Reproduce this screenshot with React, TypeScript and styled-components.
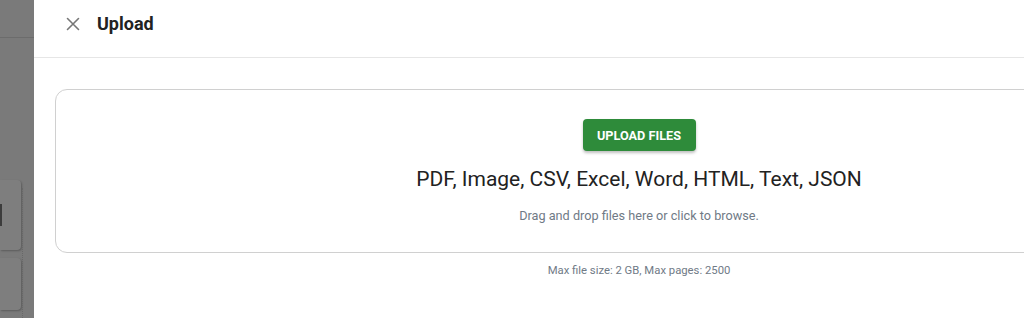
import { FC } from 'react';
import styled, { createGlobalStyle } from 'styled-components';

const GlobalStyle = createGlobalStyle`
  html, body {
    margin: 0;
    padding: 0;
    height: 318px;
    overflow: hidden;
    background: #777;
  }
  body {
    font-family: Roboto, "Liberation Sans", Arial, sans-serif;
  }
`;

const App: FC = () => (
  <>
    <GlobalStyle />
    <Screen>
      <Backdrop>
        <BgTopBar />
        <BgCard $height={ 80 }>
          <BgMark />
        </BgCard>
        <BgCard $height={ 60 } />
        <BgScroll />
      </Backdrop>
      <Drawer>
        <Header>
          <CloseButton aria-label='close'>
            <svg width='14' height='14' viewBox='0 0 14 14'>
              <path d='M1.5 1.5 L12.5 12.5 M12.5 1.5 L1.5 12.5' stroke='#777' strokeWidth='1.6' strokeLinecap='round' />
            </svg>
          </CloseButton>
          <Title>Upload</Title>
        </Header>
        <Body>
          <DropZone>
            <UploadButton>Upload files</UploadButton>
            <Formats>PDF, Image, CSV, Excel, Word, HTML, Text, JSON</Formats>
            <Hint>Drag and drop files here or click to browse.</Hint>
          </DropZone>
          <Limits>Max file size: 2 GB, Max pages: 2500</Limits>
        </Body>
      </Drawer>
    </Screen>
  </>
);

const Screen = styled.div`
  display: flex;
  width: 1024px;
  height: 318px;
  overflow: hidden;
`;

const Backdrop = styled.div`
  position: relative;
  flex: 0 0 34px;
  display: flex;
  flex-direction: column;
  background: #7a7a7a;
`;

const BgTopBar = styled.div`
  height: 42px;
  border-bottom: 1px solid #6c6c6c;
  margin-bottom: 142px;
`;

interface BgCardProps {
  $height: number;
}

const BgCard = styled.div<BgCardProps>`
  height: ${ props => props.$height }px;
  width: 21px;
  margin-bottom: 8px;
  background: #7e7e7e;
  border-radius: 0 4px 4px 0;
  box-shadow: 1px 1px 2px rgba(0, 0, 0, 0.25);
  display: flex;
  align-items: center;
`;

const BgMark = styled.div`
  width: 2px;
  height: 22px;
  background: #3c3c3c;
`;

const BgScroll = styled.div`
  position: absolute;
  left: 22px;
  top: 188px;
  bottom: 0;
  border-left: 1px dotted #686868;
`;

const Drawer = styled.div`
  flex: 0 0 1210px;
  background: #fff;
  box-shadow: -2px 0 4px rgba(0, 0, 0, 0.15);
  display: flex;
  flex-direction: column;
`;

const Header = styled.div`
  height: 58px;
  display: flex;
  align-items: flex-start;
  gap: 16px;
  padding: 13px 0 0 31px;
  box-sizing: border-box;
  border-bottom: 1px solid #e6e6e6;
`;

const CloseButton = styled.div`
  width: 16px;
  height: 22px;
  display: flex;
  align-items: center;
  justify-content: center;
`;

const Title = styled.h1`
  margin: 0;
  font-size: 18px;
  line-height: 22px;
  font-weight: 700;
  color: #222;
`;

const Body = styled.div`
  padding: 31px 21px 0 21px;
  display: flex;
  flex-direction: column;
  align-items: center;
`;

const DropZone = styled.div`
  width: 100%;
  box-sizing: border-box;
  height: 164px;
  border: 1px solid #d0d0d0;
  border-radius: 12px;
  display: flex;
  flex-direction: column;
  align-items: center;
  padding-top: 29px;
`;

const UploadButton = styled.div`
  width: 113px;
  height: 32px;
  display: flex;
  align-items: center;
  justify-content: center;
  background: #2e8b3a;
  color: #fff;
  border-radius: 4px;
  font-size: 12.7px;
  font-weight: 700;
  text-transform: uppercase;
  box-shadow: 0 2px 3px rgba(0, 0, 0, 0.25);
`;

const Formats = styled.div`
  margin-top: 15px;
  font-size: 21px;
  color: #222;
  line-height: 26px;
`;

const Hint = styled.div`
  margin-top: 16px;
  font-size: 12.7px;
  color: #707a86;
`;

const Limits = styled.div`
  margin-top: 11px;
  font-size: 11.3px;
  color: #707a86;
`;

export default App;
